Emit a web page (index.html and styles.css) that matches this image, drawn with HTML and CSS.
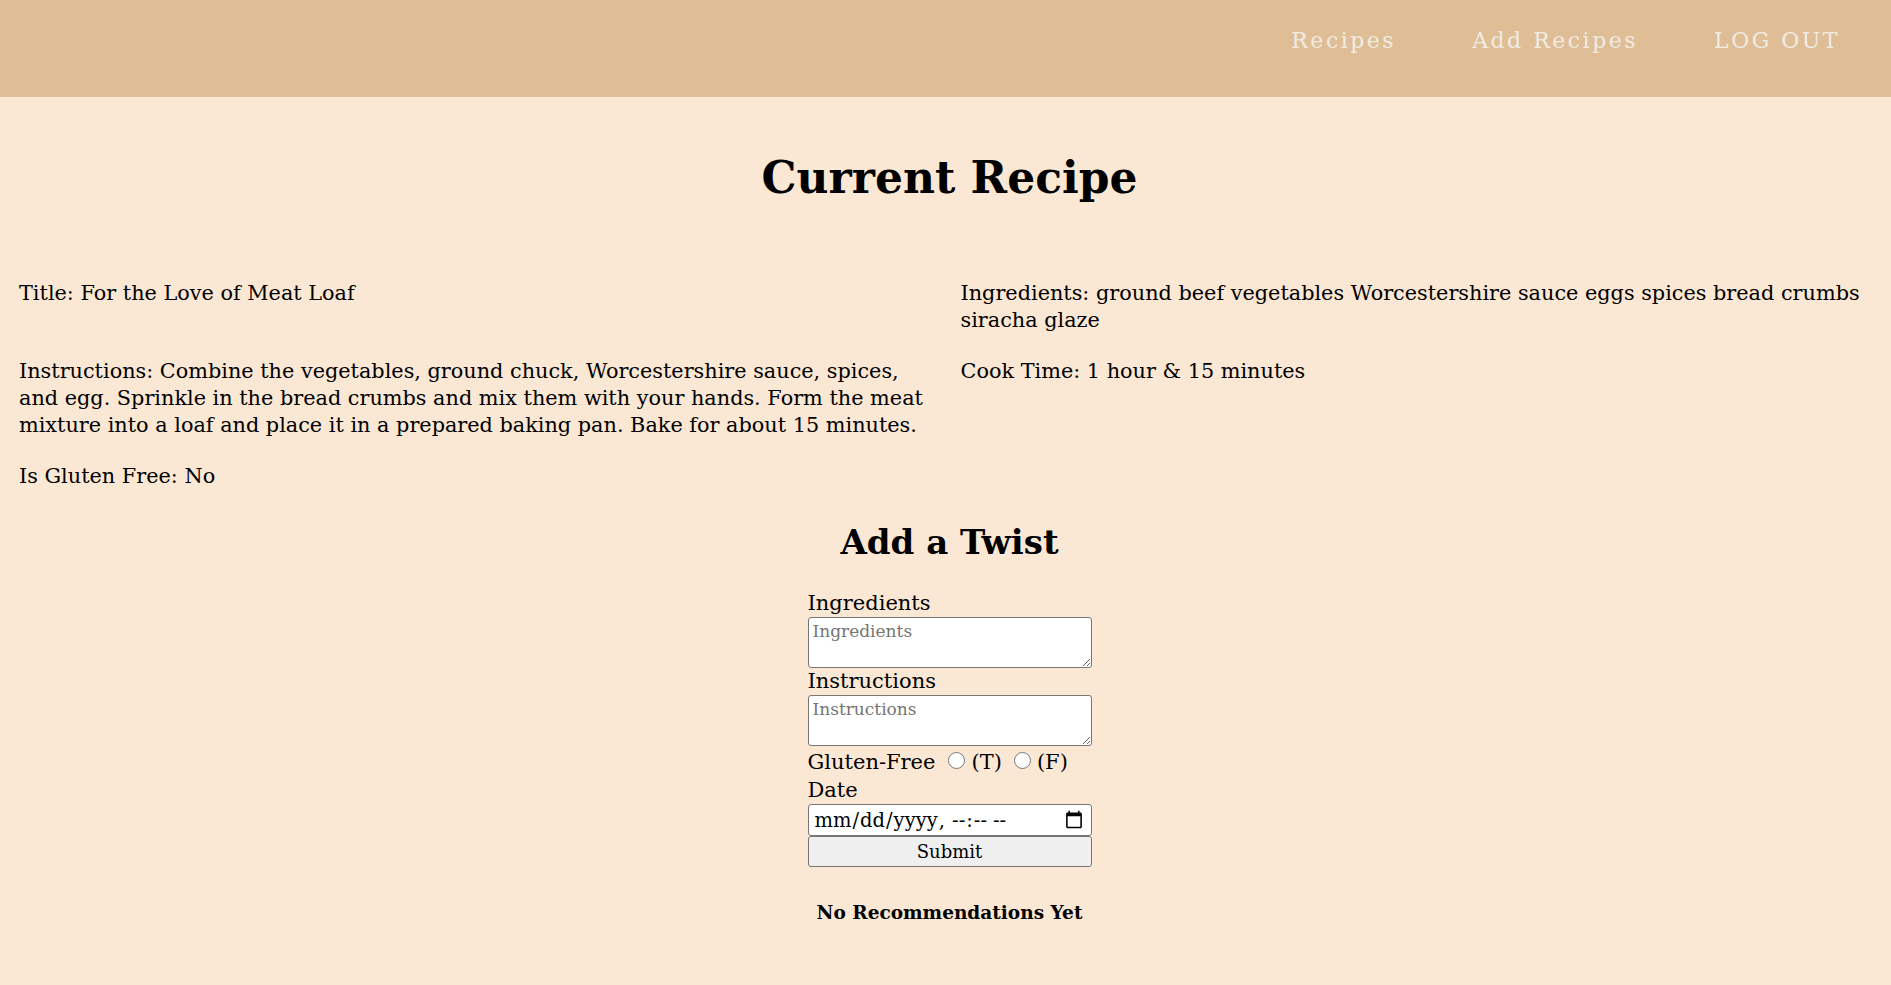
FILE: index.html
```html
<!DOCTYPE html>
<html lang="en">
<head>
<meta charset="utf-8">
<title>Current Recipe</title>
<link rel="stylesheet" href="styles.css">
</head>
<body>
<header class="topbar">
  <nav class="nav">
    <a class="nav-link" href="#">Recipes</a>
    <a class="nav-link" href="#">Add Recipes</a>
    <a class="nav-link" href="#">LOG OUT</a>
  </nav>
</header>
<main class="page">
  <h1 class="page-title">Current Recipe</h1>
  <section class="recipe">
    <p class="field">Title: For the Love of Meat Loaf</p>
    <p class="field">Ingredients: ground beef vegetables Worcestershire sauce eggs spices bread crumbs siracha glaze</p>
    <p class="field">Instructions: Combine the vegetables, ground chuck, Worcestershire sauce, spices, and egg. Sprinkle in the bread crumbs and mix them with your hands. Form the meat mixture into a loaf and place it in a prepared baking pan. Bake for about 15 minutes.</p>
    <p class="field">Cook Time: 1 hour &amp; 15 minutes</p>
    <p class="field">Is Gluten Free: No</p>
  </section>
  <h2 class="twist-title">Add a Twist</h2>
  <form class="twist-form">
    <label class="form-label" for="ing">Ingredients</label>
    <textarea class="form-area" id="ing" placeholder="Ingredients"></textarea>
    <label class="form-label" for="ins">Instructions</label>
    <textarea class="form-area" id="ins" placeholder="Instructions"></textarea>
    <div class="radio-row">
      <span class="radio-label">Gluten-Free</span>
      <input class="radio" type="radio" name="gf" id="gft"><label for="gft">(T)</label>
      <input class="radio" type="radio" name="gf" id="gff"><label for="gff">(F)</label>
    </div>
    <label class="form-label" for="dt">Date</label>
    <input class="form-date" type="datetime-local" id="dt">
    <button class="form-submit" type="button">Submit</button>
  </form>
  <h4 class="no-recs">No Recommendations Yet</h4>
</main>
</body>
</html>
```

FILE: styles.css
```css
html, body {
  margin: 0;
  padding: 0;
}

body {
  background: #fae7d4;
  color: #000;
  font-family: "DejaVu Serif", "Liberation Serif", serif;
  min-height: 985px;
}

.topbar {
  height: 97px;
  background: #dfbe95;
  display: flex;
  justify-content: flex-end;
  align-items: flex-start;
  box-sizing: border-box;
  padding: 28px 51px 0 0;
}

.nav {
  display: flex;
  gap: 76px;
}

.nav-link {
  color: #f0ebe3;
  text-decoration: none;
  font-family: "DejaVu Serif", serif;
  font-size: 22px;
  line-height: 26px;
  letter-spacing: 2.5px;
}

.page {
  padding: 0 11px 0 19px;
}

.page-title {
  margin: 0;
  padding-top: 55px;
  text-align: center;
  font-size: 44px;
  line-height: 52px;
  font-weight: bold;
}

.recipe {
  margin-top: 76px;
  display: grid;
  grid-template-columns: 1fr 1fr;
  column-gap: 22px;
  row-gap: 24px;
}

.field {
  margin: 0;
  font-size: 20.8px;
  line-height: 27px;
}

.twist-title {
  margin: 32px 0 0;
  text-align: center;
  font-size: 34px;
  line-height: 40px;
  font-weight: bold;
}

.twist-form {
  width: 284px;
  margin: 28px auto 0;
  display: flex;
  flex-direction: column;
}

.form-label {
  font-size: 21px;
  line-height: 27px;
}

.form-area {
  display: block;
  box-sizing: border-box;
  width: 284px;
  height: 51px;
  margin: 0;
  padding: 3px 4px;
  border: 1px solid #767676;
  border-radius: 3px;
  background: #fff;
  font-family: "DejaVu Serif", serif;
  font-size: 17px;
  line-height: 20px;
  resize: vertical;
}

.form-area::placeholder {
  color: #757575;
}

.radio-row {
  display: flex;
  align-items: center;
  height: 31px;
  padding-top: 2px;
  box-sizing: border-box;
  font-size: 21px;
  line-height: 27px;
}

.radio-label {
  margin-right: 13px;
}

.radio {
  width: 17px;
  height: 17px;
  margin: 0 6px 4px 0;
}

.radio + label {
  margin-right: 12px;
}

.form-date {
  box-sizing: border-box;
  width: 284px;
  height: 32px;
  margin: 0;
  padding: 1px 5px;
  border: 1px solid #767676;
  border-radius: 3px;
  background: #fff;
  font-family: "DejaVu Serif", serif;
  font-size: 19.5px;
}

.form-submit {
  box-sizing: border-box;
  width: 284px;
  height: 31px;
  margin: 0;
  padding: 0;
  border: 1px solid #767676;
  border-radius: 3px;
  background: #efefef;
  color: #000;
  font-family: "DejaVu Serif", serif;
  font-size: 18px;
}

.no-recs {
  margin: 34px 0 0;
  text-align: center;
  font-size: 18.5px;
  line-height: 24px;
  font-weight: bold;
}
```
